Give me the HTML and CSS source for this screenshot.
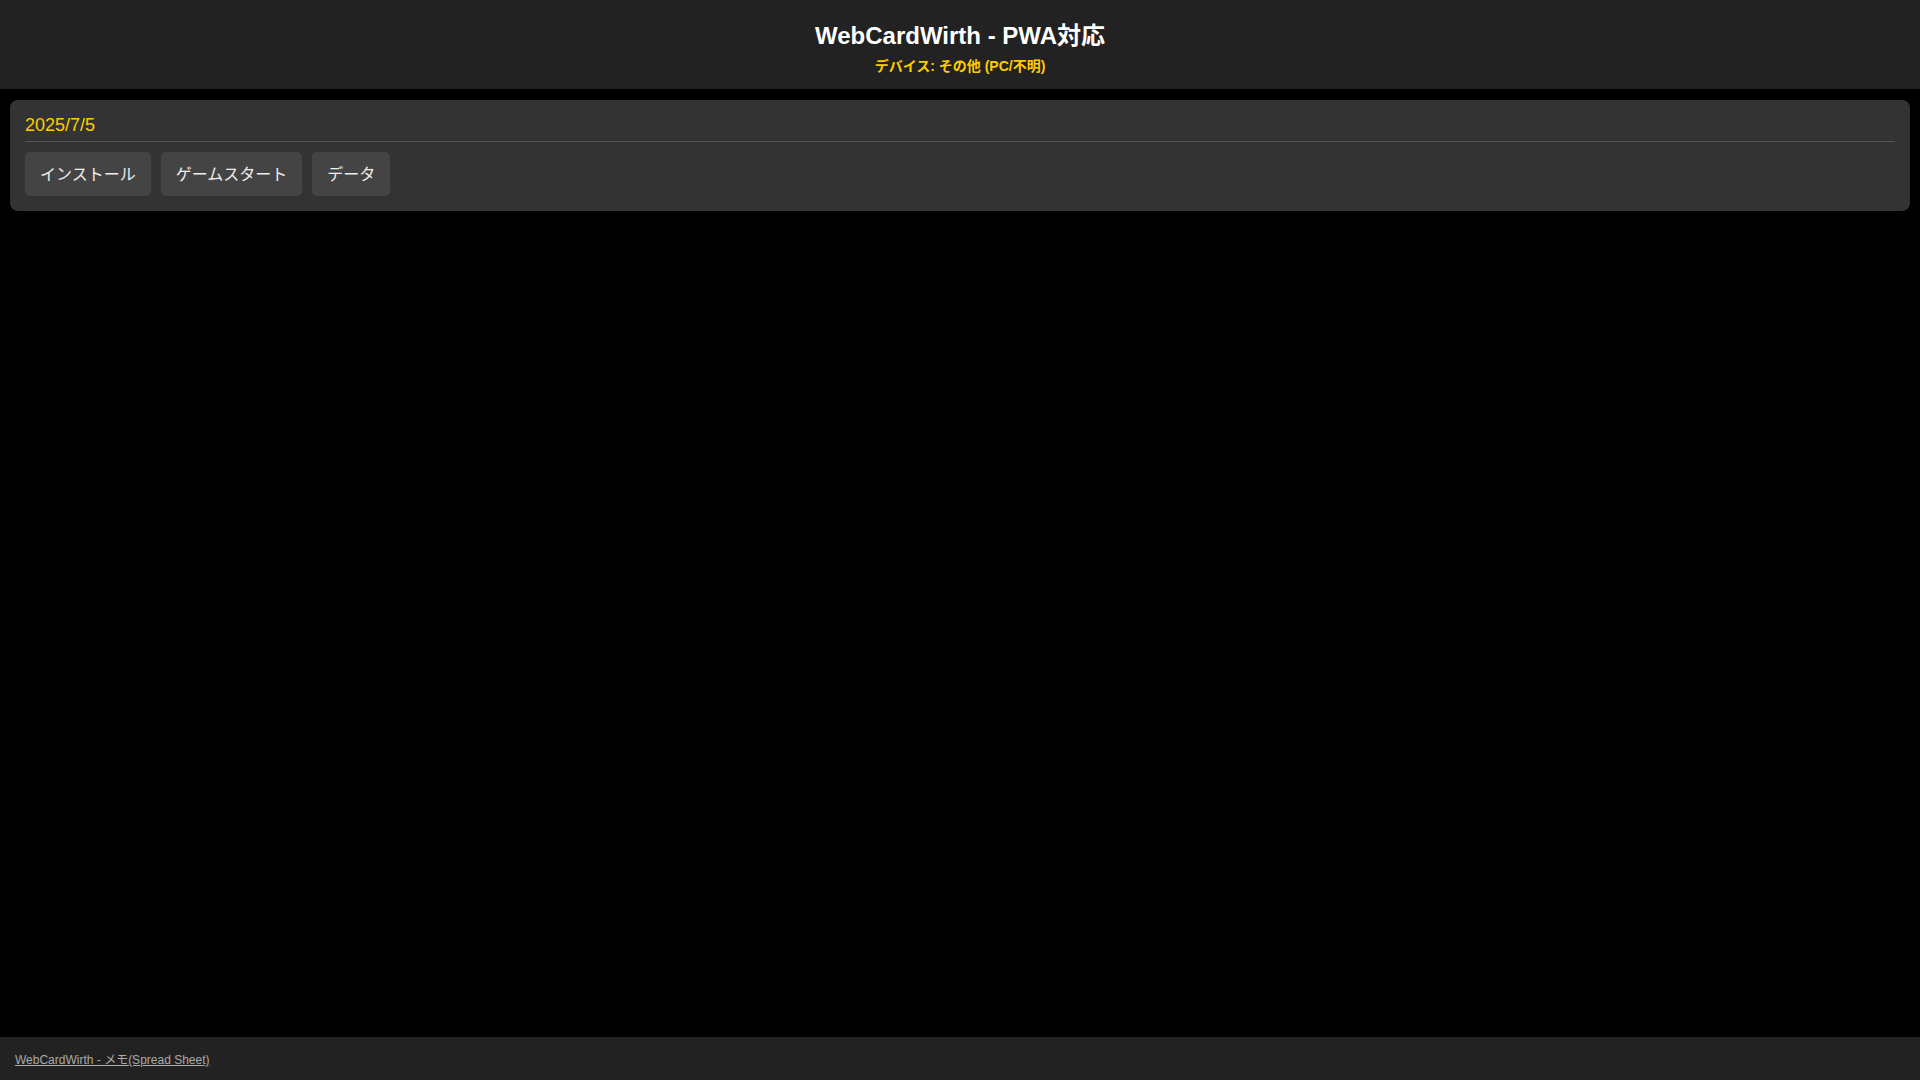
FILE: index.html
```html
<!DOCTYPE html>
<html lang="ja">
<head>
<meta charset="utf-8">
<title>WebCardWirth - PWA対応</title>
<link rel="stylesheet" href="styles.css">
</head>
<body>
<header class="site-header">
  <h1 class="title">WebCardWirth - PWA対応</h1>
  <div class="device">デバイス: その他 (PC/不明)</div>
</header>
<main class="content">
  <section class="card">
    <div class="date">2025/7/5</div>
    <div class="actions">
      <button class="btn">インストール</button>
      <button class="btn">ゲームスタート</button>
      <button class="btn">データ</button>
    </div>
  </section>
</main>
<footer class="site-footer">
  <a class="footer-link" href="#">WebCardWirth - メモ(Spread Sheet)</a>
</footer>
</body>
</html>
```
FILE: styles.css
```css
* { box-sizing: border-box; }
html, body { margin: 0; padding: 0; }
body {
  background: #000;
  color: #eee;
  font-family: "Liberation Sans", Arial, "Noto Sans CJK JP", sans-serif;
  min-height: 100vh;
  display: flex;
  flex-direction: column;
}
.site-header {
  background: #222;
  text-align: center;
  padding: 22px 10px 0;
  height: 89px;
}
.title {
  margin: 0;
  font-size: 24px;
  font-weight: bold;
  color: #fff;
  line-height: 28px;
}
.device {
  margin-top: 6px;
  font-size: 14px;
  font-weight: bold;
  color: #ffcc00;
  line-height: 20px;
}
.content {
  padding: 11px 10px 0;
}
.card {
  background: #333;
  border-radius: 8px;
  padding: 15px;
}
.date {
  font-size: 18px;
  color: #ffcc00;
  line-height: 21px;
  padding-bottom: 5px;
  border-bottom: 1px solid #555;
  margin-bottom: 10px;
}
.actions {
  display: flex;
  gap: 10px;
}
.btn {
  background: #444;
  color: #eee;
  border: none;
  border-radius: 5px;
  font-family: "Liberation Sans", Arial, "Noto Sans CJK JP", sans-serif;
  font-size: 16px;
  line-height: 24px;
  padding: 11px 15px 9px;
  height: 44px;
  cursor: pointer;
}
.site-footer {
  margin-top: auto;
  background: #222;
  height: 43px;
  padding: 0 15px;
  display: flex;
  align-items: center;
}
.footer-link {
  color: #aaa;
  font-size: 12px;
  text-decoration: underline;
}
```
